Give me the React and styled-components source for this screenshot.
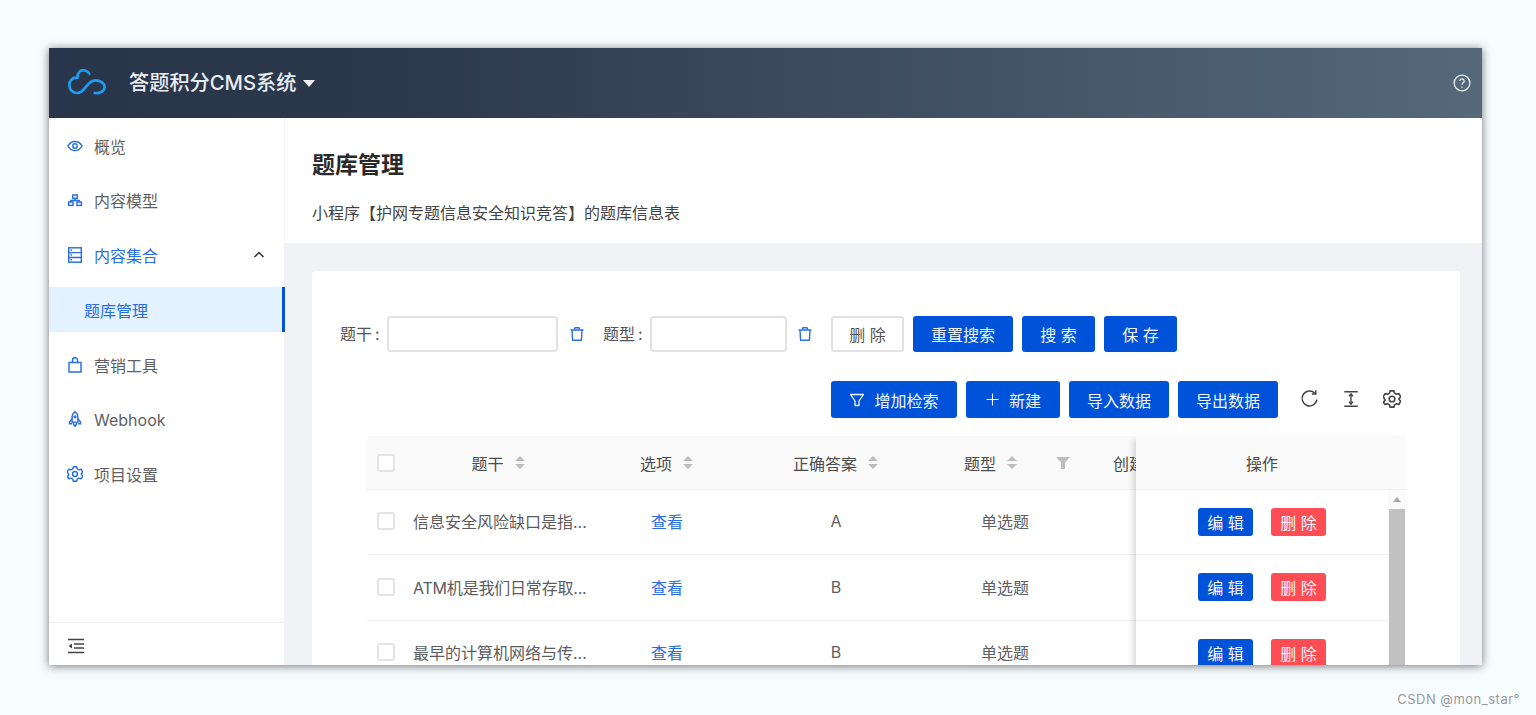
import React from "react";
import styled, { createGlobalStyle } from "styled-components";

const BLUE = "#0052d9";
const LINK = "#2a6fe0";

const Global = createGlobalStyle`
  html, body { margin: 0; padding: 0; background: #f7fdff; overflow: hidden; }
  body { font-family: Inter, "Noto Sans CJK SC", sans-serif; }
  * { box-sizing: border-box; }
`;

const Page = styled.div`
  width: 1536px;
  height: 715px;
  padding: 48px 0 0 49px;
  overflow: hidden;
`;
const Win = styled.div`
  width: 1433px;
  height: 617px;
  display: flex;
  flex-direction: column;
  overflow: hidden;
  background: #fff;
  box-shadow: 0 1px 9px rgba(0, 0, 0, 0.55);
`;
const Watermark = styled.div`
  margin-top: 26px;
  width: 1471px;
  text-align: right;
  font: 13px/16px Inter, "Noto Sans CJK SC", sans-serif;
  letter-spacing: 0.5px;
  color: #9a9a9a;
`;
const Header = styled.header`
  height: 70px;
  flex: none;
  display: flex;
  align-items: center;
  padding: 0 11px 0 19px;
  background: linear-gradient(90deg, #29354a 0%, #2c394c 25%, #55697a 100%);
  color: #fff;
`;
const Logo = styled.svg`
  width: 38px;
  height: 27px;
  flex: none;
  margin-top: -1px;
`;
const Brand = styled.div`
  margin-left: 23px;
  padding-bottom: 3px;
  font-size: 20.2px;
  font-weight: 500;
  color: #e9edf1;
  white-space: nowrap;
`;
const Caret = styled.span`
  margin-left: 7px;
  width: 0;
  height: 0;
  border-left: 6.5px solid transparent;
  border-right: 6.5px solid transparent;
  border-top: 7px solid #f2f4f6;
`;
const HelpWrap = styled.div`
  margin-left: auto;
  display: flex;
  color: #e8edf0;
`;
const Body = styled.div`
  flex: 1;
  min-height: 0;
  display: flex;
`;
const Side = styled.aside`
  width: 236px;
  flex: none;
  display: flex;
  flex-direction: column;
  border-right: 1px solid #f2f3f5;
`;
const Nav = styled.nav`
  flex: 1;
  display: flex;
  flex-direction: column;
  gap: 9.8px;
  padding-top: 5px;
`;
const NavItem = styled.div`
  height: 45px;
  display: flex;
  align-items: center;
  gap: 11px;
  padding: 0 19px 0 18px;
  font-size: 16px;
  color: ${(p) => (p.$on ? LINK : "#5f5f5f")};
  svg.ic { color: ${LINK}; flex: none; }
`;
const LatinLabel = styled.span`
  padding-top: 2px;
`;
const NavChevron = styled.span`
  margin-left: auto;
  display: flex;
  color: #333;
`;
const SubItem = styled.div`
  height: 45px;
  display: flex;
  align-items: center;
  padding-left: 35px;
  font-size: 16px;
  color: ${LINK};
  background: #e3f2fe;
  border-right: 3px solid ${BLUE};
  margin-right: -1px;
`;
const SideFoot = styled.div`
  height: 43px;
  flex: none;
  border-top: 1px solid #eeeeee;
  padding: 15px 0 0 18px;
  color: #444;
  svg { display: block; }
`;
const Main = styled.main`
  flex: 1;
  min-width: 0;
  display: flex;
  flex-direction: column;
  background: #f0f2f5;
`;
const Intro = styled.div`
  height: 125px;
  flex: none;
  background: #fff;
  padding: 32px 0 0 27px;
`;
const Title = styled.h1`
  margin: 0;
  font-size: 23px;
  line-height: 30px;
  font-weight: 700;
  color: #2a2a2a;
`;
const Desc = styled.p`
  margin: 21px 0 0;
  font-size: 16px;
  line-height: 24px;
  color: #444;
`;
const Card = styled.section`
  margin: 28px 22px 0 27px;
  flex: 1;
  background: #fff;
  border-radius: 4px 4px 0 0;
  padding-top: 45px;
  overflow: hidden;
`;
const FilterRow = styled.div`
  display: flex;
  align-items: center;
  padding-left: 28px;
  height: 36px;
`;
const Label = styled.label`
  width: 41px;
  flex: none;
  font-size: 16px;
  color: #555;
  margin-left: ${(p) => p.$ml || 0}px;
  margin-right: 6px;
  padding-bottom: 2px;
  white-space: nowrap;
`;
const Input = styled.input`
  width: ${(p) => p.$w}px;
  flex: none;
  height: 36px;
  border: 2px solid #e2e2e2;
  border-radius: 4px;
  background: #fff;
  outline: none;
`;
const TrashBtn = styled.span`
  display: flex;
  margin-left: ${(p) => p.$ml}px;
  color: ${LINK};
`;
const Btn = styled.button`
  height: ${(p) => p.$h || 36}px;
  width: ${(p) => p.$w}px;
  margin-left: ${(p) => p.$ml ?? 9}px;
  display: inline-flex;
  align-items: center;
  justify-content: center;
  gap: ${(p) => p.$gap || 0}px;
  padding: 0;
  border: ${(p) => (p.$plain ? "2px solid #e2e2e2" : "none")};
  border-radius: 3px;
  background: ${(p) => (p.$plain ? "#fff" : BLUE)};
  color: ${(p) => (p.$plain ? "#555" : "#f2f6fd")};
  font: 16px Inter, "Noto Sans CJK SC", sans-serif;
  white-space: pre;
  flex: none;
`;
const Toolbar = styled.div`
  margin: 29px 54px 0 0;
  height: 37px;
  display: flex;
  justify-content: flex-end;
  align-items: center;
  padding-right: 5px;
`;
const ToolIcon = styled.span`
  display: flex;
  margin-left: ${(p) => p.$ml}px;
  margin-bottom: 2px;
  color: #444;
`;
const Table = styled.div`
  margin: 18px 54px 0 55px;
  display: flex;
  font-size: 16px;
`;
const Scroll = styled.div`
  width: 769px;
  flex: none;
  overflow: hidden;
`;
const HeadRow = styled.div`
  height: 54px;
  display: flex;
  background: #fafafa;
  border-bottom: 1px solid #f0f0f0;
  color: #4c4c4c;
`;
const Row = styled.div`
  height: 65.4px;
  padding-bottom: 1.5px;
  display: flex;
  border-bottom: 1px solid #f0f0f0;
  color: #606060;
`;
const Cell = styled.div`
  width: ${(p) => p.$w}px;
  flex: none;
  display: flex;
  align-items: center;
  justify-content: ${(p) => p.$justify || "center"};
  gap: 10px;
  padding: ${(p) => p.$pad || "0"};
  white-space: nowrap;
`;
const Check = styled.span`
  width: 18px;
  height: 18px;
  flex: none;
  border: 2px solid #e4e4e4;
  border-radius: 3px;
  background: #fff;
`;
const Stem = styled.span`
  display: block;
  color: #5c5c5c;
  letter-spacing: ${(p) => p.$tight || 0}px;
`;
const LinkText = styled.a`
  color: ${LINK};
`;
const Fixed = styled.div`
  width: 270px;
  flex: none;
  background: #fff;
  box-shadow: -6px 0 6px -3px rgba(0, 0, 0, 0.14);
  position: relative;
`;
const FixedBody = styled.div`
  display: flex;
`;
const FixedRows = styled.div`
  width: 252px;
  flex: none;
`;
const OpRow = styled(Row)`
  align-items: center;
  justify-content: center;
  gap: 18px;
`;
const OpHead = styled(HeadRow)`
  align-items: center;
  justify-content: center;
  padding-right: 18px;
`;
const MiniBtn = styled.button`
  width: 55px;
  height: 28px;
  margin-top: 1px;
  border: none;
  border-radius: 3px;
  padding: 0;
  background: ${(p) => (p.$danger ? "#ff4d55" : BLUE)};
  color: #f6f8fd;
  font: 16px Inter, "Noto Sans CJK SC", sans-serif;
  white-space: pre;
`;
const ScrollBar = styled.div`
  width: 18px;
  flex: none;
  background: #fafafa;
  display: flex;
  flex-direction: column;
  align-items: center;
`;
const ScrollArrow = styled.span`
  margin: 7px 0;
  height: 5px;
  width: 0;
  border-left: 4.5px solid transparent;
  border-right: 4.5px solid transparent;
  border-bottom: 5px solid #a8a8a8;
`;
const Thumb = styled.div`
  width: 16px;
  height: 180px;
  background: #c1c1c1;
`;

const Sort = () => (
  <svg width="12" height="15" viewBox="0 0 11 15" fill="#bdbdbd">
    <path d="M5.5 1 10.5 6H.5z" />
    <path d="M5.5 14 .5 9h10z" />
  </svg>
);

const Ic = ({ children, size = 16 }) => (
  <svg className="ic" width={size} height={size} viewBox="0 0 16 16" fill="none" stroke="currentColor" strokeWidth="1.45">
    {children}
  </svg>
);

const Trash = () => (
  <svg width="16" height="16" viewBox="0 0 16 16" fill="none" stroke="currentColor" strokeWidth="1.4">
    <path d="M1.5 4h13" />
    <path d="M5.3 3.8 6 1.8h4l.7 2" />
    <path d="M3 4.2 3.6 14.2h8.8L13 4.2" strokeLinejoin="round" />
  </svg>
);

const Gear = ({ size = 16 }) => (
  <svg className="ic" width={size} height={size} viewBox="0.3 0.3 15.4 15.4" fill="none" stroke="currentColor" strokeWidth="1.4" strokeLinejoin="round">
    <path d="M6.4 1h3.2l.5 2 1.8 1 2-.6 1.600 2.800-1.500 1.500v.600l1.500 1.500-1.600 2.800-2-.6-1.800 1-.5 2H6.400l-.5-2-1.800-1-2 .6L.5 10.800 2 9.300v-.6L.5 6l1.600-2.600 2 .6 1.800-1z" />
    <circle cx="8" cy="8" r="2.4" />
  </svg>
);

const questions = [
  { text: "信息安全风险缺口是指...", ans: "A" },
  { text: "ATM机是我们日常存取...", ans: "B", tight: -0.2 },
  { text: "最早的计算机网络与传...", ans: "B" },
];

export default function App() {
  return (
    <Page>
      <Global />
      <Win>
        <Header>
          <Logo viewBox="24 24 114 81" fill="none" stroke="#1c9df0" strokeWidth="8" strokeLinecap="round">
            <path d="M88 38C82 28 70 25 61 30 55 34 52 42 52 50 36 49 28 60 28 72 28 86 38 96 52 96 76 96 80 58 106 58 122 58 134 68 134 78 134 90 120 98 104 96" />
          </Logo>
          <Brand>答题积分CMS系统</Brand>
          <Caret />
          <HelpWrap>
            <svg width="18" height="18" viewBox="0 0 16 16" fill="none" stroke="currentColor" strokeWidth="1.2">
              <circle cx="8" cy="8" r="7" />
              <path d="M6.1 6.3a1.9 1.9 0 1 1 2.9 1.6c-.7.4-1 .8-1 1.6" />
              <path d="M8 11v1.2" />
            </svg>
          </HelpWrap>
        </Header>
        <Body>
          <Side>
            <Nav>
              <NavItem>
                <Ic>
                  <path d="M.9 8C2.6 4.9 5 3.4 8 3.4s5.4 1.5 7.1 4.6c-1.7 3.100-4.100 4.600-7.100 4.600S2.600 11.100.9 8z" />
                  <circle cx="8" cy="8" r="2.200" />
                </Ic>
                概览
              </NavItem>
              <NavItem>
                <Ic>
                  <rect x="5.800" y="3" width="4.400" height="3.400" />
                  <rect x="1.600" y="10" width="4.400" height="3.400" />
                  <rect x="10" y="10" width="4.400" height="3.400" />
                  <path d="M8 6.400v2H3.800V10M8 8.400h4.200V10" />
                </Ic>
                内容模型
              </NavItem>
              <NavItem $on>
                <Ic>
                  <rect x="1.700" y=".8" width="12.600" height="14.400" />
                  <path d="M1.700 5.600h12.600M1.700 10.400h12.600M3.500 3.200h1.500M3.500 8h1.500M3.500 12.800h1.500" />
                </Ic>
                内容集合
                <NavChevron>
                  <svg width="12" height="12" viewBox="0 0 12 12" fill="none" stroke="currentColor" strokeWidth="1.500">
                    <path d="M1.500 8 6 3.500 10.500 8" />
                  </svg>
                </NavChevron>
              </NavItem>
              <SubItem>题库管理</SubItem>
              <NavItem>
                <Ic>
                  <path d="M2 5.500h12v9.500H2z" />
                  <path d="M5.500 5.500V3.200a2.500 2.500 0 0 1 5 0v2.300" />
                </Ic>
                营销工具
              </NavItem>
              <NavItem>
                <Ic>
                  <path d="M8 .6c2 1.600 2.900 3.500 2.900 5.500v5H5.100v-5C5.100 4.100 6 2.200 8 .6z" />
                  <path d="M5.100 7.800 2.500 11v1.700h2.600M10.900 7.800l2.600 3.200v1.700h-2.600" />
                  <path d="M6.300 11.100c0 2 .7 3.400 1.700 4.300 1-.9 1.700-2.300 1.700-4.300" />
                  <circle cx="8" cy="5.800" r=".9" />
                </Ic>
                <LatinLabel>Webhook</LatinLabel>
              </NavItem>
              <NavItem>
                <Gear />
                项目设置
              </NavItem>
            </Nav>
            <SideFoot>
              <svg width="18" height="16" viewBox="0 0 18 16" fill="none" stroke="currentColor" strokeWidth="1.300">
                <path d="M1 1.500h16M1 14.500h16M7 6h10M7 10h10" />
                <path d="M1.500 8 5 5.500v5z" fill="currentColor" stroke="none" />
              </svg>
            </SideFoot>
          </Side>
          <Main>
            <Intro>
              <Title>题库管理</Title>
              <Desc>小程序【护网专题信息安全知识竞答】的题库信息表</Desc>
            </Intro>
            <Card>
              <FilterRow>
                <Label>题干{"\u2009"}:</Label>
                <Input $w={171} />
                <TrashBtn $ml={11}><Trash /></TrashBtn>
                <Label $ml={18}>题型{"\u2009"}:</Label>
                <Input $w={137} />
                <TrashBtn $ml={10}><Trash /></TrashBtn>
                <Btn $plain $w={73} $ml={18}>删 除</Btn>
                <Btn $w={100}>重置搜索</Btn>
                <Btn $w={73}>搜 索</Btn>
                <Btn $w={73}>保 存</Btn>
              </FilterRow>
              <Toolbar>
                <Btn $h={37} $w={126} $gap={9} $ml={0}>
                  <svg width="16" height="16" viewBox="0 0 16 16" fill="none" stroke="currentColor" strokeWidth="1.300" strokeLinejoin="round">
                    <path d="M1.500 2.500h13L10 9v4.500H6V9z" />
                  </svg>
                  增加检索
                </Btn>
                <Btn $h={37} $w={94} $gap={9}>
                  <svg width="15" height="15" viewBox="0 0 15 15" fill="none" stroke="currentColor" strokeWidth="1.100">
                    <path d="M7.500 1.500v12M1.500 7.500h12" />
                  </svg>
                  新建
                </Btn>
                <Btn $h={37} $w={100}>导入数据</Btn>
                <Btn $h={37} $w={100}>导出数据</Btn>
                <ToolIcon $ml={22}>
                  <svg width="19" height="19" viewBox="0 0 16 16" fill="none" stroke="currentColor" strokeWidth="1.250">
                    <path d="M14.300 9A6.300 6.300 0 1 1 12.500 3.500" />
                    <path d="M13.300 1v3.300H10" />
                  </svg>
                </ToolIcon>
                <ToolIcon $ml={23}>
                  <svg width="18" height="18" viewBox="0 0 16 16" fill="none" stroke="currentColor" strokeWidth="1.250">
                    <path d="M2 1.500h12M2 14.500h12M8 4v8" />
                    <path d="M6.300 5.500 8 3.500l1.700 2M6.300 10.500 8 12.500l1.700-2" />
                  </svg>
                </ToolIcon>
                <ToolIcon $ml={23}>
                  <Gear size={18} />
                </ToolIcon>
              </Toolbar>
              <Table>
                <Scroll>
                  <HeadRow>
                    <Cell $w={30} $justify="flex-start" $pad="0 0 0 10px"><Check /></Cell>
                    <Cell $w={203}>题干<Sort /></Cell>
                    <Cell $w={134}>选项<Sort /></Cell>
                    <Cell $w={204}>正确答案<Sort /></Cell>
                    <Cell $w={106}>题型<Sort /></Cell>
                    <Cell $w={38}>
                      <svg width="14" height="12" viewBox="0 0 14 12" fill="#bdbdbd">
                        <path d="M0 0h14L9 5.500V12H5V5.500z" />
                      </svg>
                    </Cell>
                    <Cell $w={100} $justify="flex-start" $pad="0 0 0 31px">创建时间</Cell>
                  </HeadRow>
                  {questions.map((q) => (
                    <Row key={q.text}>
                      <Cell $w={30} $justify="flex-start" $pad="0 0 0 10px"><Check /></Cell>
                      <Cell $w={203} $justify="flex-start" $pad="0 0 0 16px"><Stem $tight={q.tight}>{q.text}</Stem></Cell>
                      <Cell $w={134}><LinkText>查看</LinkText></Cell>
                      <Cell $w={204}>{q.ans}</Cell>
                      <Cell $w={134}>单选题</Cell>
                    </Row>
                  ))}
                </Scroll>
                <Fixed>
                  <OpHead>操作</OpHead>
                  <FixedBody>
                    <FixedRows>
                      {questions.map((q) => (
                        <OpRow key={q.text}>
                          <MiniBtn>编 辑</MiniBtn>
                          <MiniBtn $danger>删 除</MiniBtn>
                        </OpRow>
                      ))}
                    </FixedRows>
                    <ScrollBar>
                      <ScrollArrow />
                      <Thumb />
                    </ScrollBar>
                  </FixedBody>
                </Fixed>
              </Table>
            </Card>
          </Main>
        </Body>
      </Win>
      <Watermark>CSDN @mon_star°</Watermark>
    </Page>
  );
}
